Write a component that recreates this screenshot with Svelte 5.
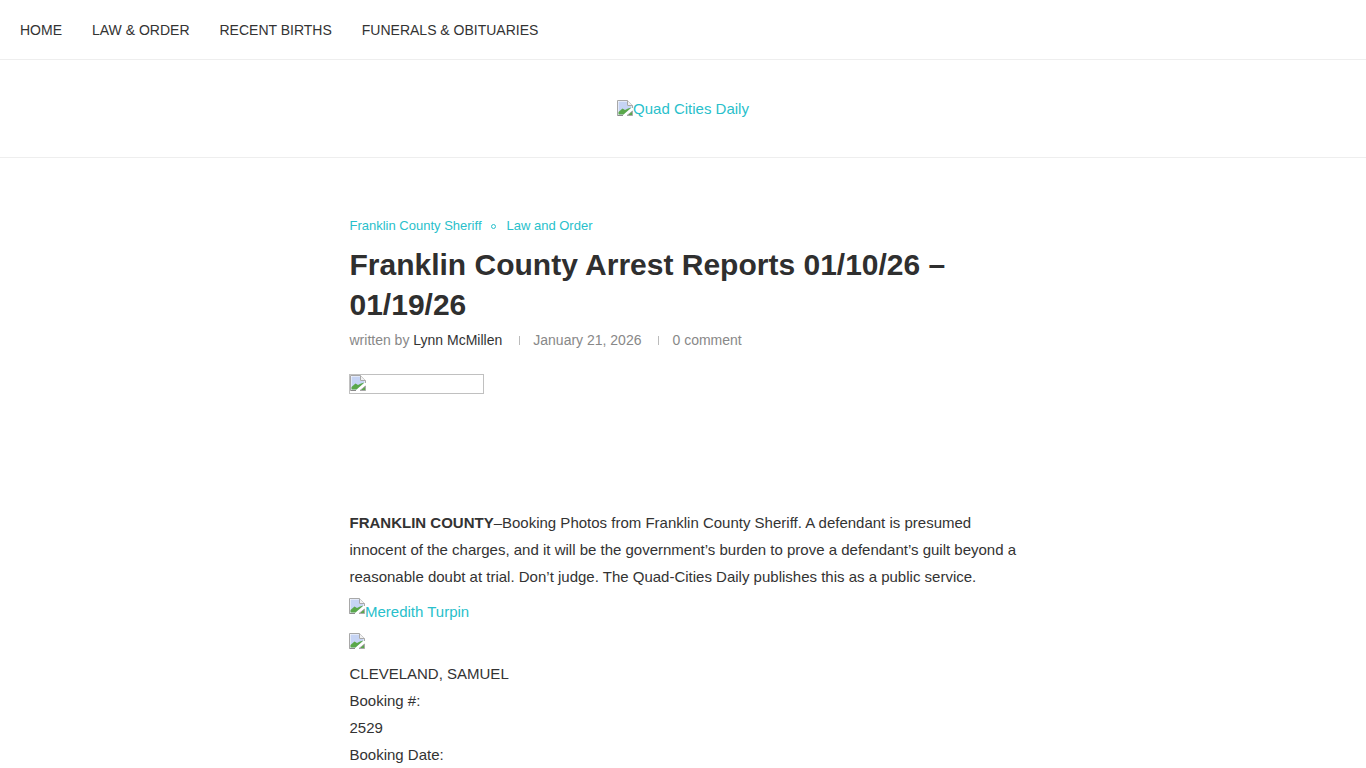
<script lang="ts">
	const navItems = ['HOME', 'LAW & ORDER', 'RECENT BIRTHS', 'FUNERALS & OBITUARIES'];
	const bookingLines = ['CLEVELAND, SAMUEL', 'Booking #:', '2529', 'Booking Date:'];
</script>

{#snippet brokenIcon()}
	<svg class="broken" width="16" height="16" viewBox="0 0 16 16" aria-hidden="true">
		<path d="M0.5 15.5V0.5H10.5L15.5 5.5V8" fill="#fff" stroke="#a8a8a8" />
		<path d="M0.5 15.5H6" fill="none" stroke="#8a8a8a" />
		<path d="M1.5 1.5H10V6H14.5V7.5L6.5 14.5H1.5Z" fill="#c6d4f4" />
		<path d="M1.5 14.5V12L5.5 8.5L8 10L11 8.5L14.5 7.5L6.5 14.5Z" fill="#5aa84a" />
		<path d="M10.5 0.5V5.5H15.5" fill="#f1f1f1" stroke="#a8a8a8" />
		<path d="M15.5 11V15.5H10L15.5 11Z" fill="#5aa84a" stroke="#a8a8a8" />
	</svg>
{/snippet}

<nav class="topnav">
	{#each navItems as item}
		<a href="#top">{item}</a>
	{/each}
</nav>

<header class="masthead">
	<a class="logo" href="#top">{@render brokenIcon()}Quad Cities Daily</a>
</header>

<main class="post">
	<div class="cats">
		<a href="#top">Franklin County Sheriff</a>
		<span class="dot"></span>
		<a href="#top">Law and Order</a>
	</div>
	<h1>Franklin County Arrest Reports 01/10/26 – 01/19/26</h1>
	<div class="meta">
		<span>written by <a href="#top">Lynn McMillen</a></span>
		<i></i>
		<span>January 21, 2026</span>
		<i></i>
		<span>0 comment</span>
	</div>

	<div class="ad-slot">
		<div class="ad-frame">{@render brokenIcon()}</div>
	</div>

	<p class="lede">
		<strong>FRANKLIN COUNTY</strong>–Booking Photos from Franklin County Sheriff. A defendant is presumed
		innocent of the charges, and it will be the government’s burden to prove a defendant’s guilt
		beyond a reasonable doubt at trial. Don’t judge. The Quad-Cities Daily publishes this as a public
		service.
	</p>

	<a class="photo" href="#top">{@render brokenIcon()}Meredith Turpin</a>
	<div class="thumb">{@render brokenIcon()}</div>

	{#each bookingLines as line}
		<div class="line">{line}</div>
	{/each}
</main>

<style>
	:global(html), :global(body) {
		overflow: hidden;
		height: 768px;
	}
	:global(body) {
		background: #fff;
		color: #333;
		font-family: 'Liberation Sans', Arial, sans-serif;
	}
	a {
		text-decoration: none;
		color: #29bfcb;
	}
	.broken {
		display: inline-block;
		width: 16px;
		height: 16px;
	}
	.topnav {
		display: flex;
		gap: 30px;
		height: 59px;
		align-items: center;
		padding: 0 20px;
		border-bottom: 1px solid #eee;
	}
	.topnav a {
		color: #333;
		font-size: 14px;
	}
	.masthead {
		height: 97px;
		display: flex;
		align-items: center;
		justify-content: center;
		border-bottom: 1px solid #eee;
	}
	.logo {
		font-size: 15px;
		line-height: 16px;
		margin-top: -1px;
	}
	.logo .broken {
		vertical-align: -2px;
	}
	.post {
		width: 667px;
		margin: 0 auto;
		padding-top: 60px;
		font-size: 15px;
	}
	.cats {
		display: flex;
		align-items: center;
		font-size: 13px;
		line-height: 16px;
	}
	.dot {
		width: 5px;
		height: 5px;
		border: 1px solid #29bfcb;
		border-radius: 50%;
		margin: 0 11px 0 9px;
		box-sizing: border-box;
	}
	h1 {
		margin: 11px 0 0;
		font-size: 30px;
		line-height: 40px;
		font-weight: 700;
		color: #2f2f2f;
	}
	.meta {
		display: flex;
		align-items: center;
		margin-top: 5px;
		font-size: 14px;
		line-height: 20px;
		color: #888;
	}
	.meta a {
		color: #333;
	}
	.meta i {
		width: 1px;
		height: 9px;
		background: #bbb;
		margin: 0 13.5px 0 16.5px;
	}
	.ad-slot {
		height: 135px;
		padding-top: 24px;
	}
	.ad-frame {
		width: 133px;
		height: 18px;
		margin-left: -0.5px;
		border: 1px solid #c0c0c0;
		overflow: hidden;
	}
	.ad-frame .broken {
		display: block;
	}
	.lede {
		margin: 0;
		line-height: 27px;
	}
	.photo {
		display: block;
		margin-left: -0.5px;
		margin-top: 8px;
		line-height: 27px;
	}
	.photo .broken {
		vertical-align: 3px;
	}
	.thumb {
		margin-left: -0.5px;
		height: 27px;
		padding-top: 8px;
	}
	.thumb .broken {
		display: block;
	}
	.line {
		line-height: 27px;
	}
</style>
